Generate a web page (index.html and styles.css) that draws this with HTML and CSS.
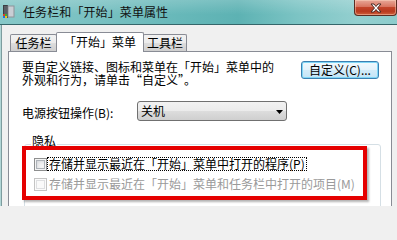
FILE: index.html
```html
<!DOCTYPE html>
<html lang="zh-CN">
<head>
<meta charset="utf-8">
<title>任务栏和「开始」菜单属性</title>
<link rel="stylesheet" href="styles.css">
</head>
<body>
<div class="window">
  <div class="titlebar">
    <svg class="app-icon" width="12" height="14" viewBox="0 0 12 14">
      <rect x="0.5" y="0.5" width="4" height="12" fill="#5a5f66" stroke="#3b3f44"/>
      <rect x="5" y="1" width="6" height="11" fill="#c9ced4" stroke="#8d9399" stroke-width="1"/>
      <rect x="0" y="9" width="2" height="2" fill="#e04020"/>
      <rect x="2" y="9" width="2" height="2" fill="#40b030"/>
      <rect x="0" y="11" width="2" height="2" fill="#2070e0"/>
      <rect x="2" y="11" width="2" height="2" fill="#f0c020"/>
    </svg>
    <span class="title">任务栏和「开始」菜单属性</span>
    <div class="close">
      <svg width="12" height="10" viewBox="0 0 12 10">
        <path d="M1 1 L4 1 L6 3.5 L8 1 L11 1 L7.5 5 L11 9 L8 9 L6 6.5 L4 9 L1 9 L4.5 5 Z" fill="#ffffff" stroke="#4a2a24" stroke-width="1" stroke-linejoin="round"/>
      </svg>
    </div>
  </div>
  <div class="client">
    <div class="tabs">
      <div class="tab tab-first">任务栏</div>
      <div class="tab tab-active">「开始」菜单</div>
      <div class="tab tab-last">工具栏</div>
    </div>
    <div class="panel">
      <div class="intro">
        <div class="intro-text">
          <div class="intro-line">要自定义链接、图标和菜单在「开始」菜单中的</div>
          <div class="intro-line">外观和行为，请单击“自定义”。</div>
        </div>
        <button class="btn">自定义(C)...</button>
      </div>
      <div class="power">
        <label class="power-label">电源按钮操作(B):</label>
        <div class="combo">
          <span class="combo-text">关机</span>
          <svg class="combo-arrow" width="7" height="4" viewBox="0 0 7 4"><path d="M0 0 H7 L3.5 4 Z" fill="#000"/></svg>
        </div>
      </div>
      <fieldset class="group">
        <legend class="group-title">隐私</legend>
        <div class="check-row">
          <span class="cb"></span>
          <span class="cb-label cb-focus">存储并显示最近在「开始」菜单中打开的程序(P)</span>
        </div>
        <div class="check-row check-row-2 disabled">
          <span class="cb"></span>
          <span class="cb-label">存储并显示最近在「开始」菜单和任务栏中打开的项目(M)</span>
        </div>
      </fieldset>
    </div>
  </div>
  <div class="annotation"></div>
</div>
</body>
</html>
```
FILE: styles.css
```css
html, body {
  margin: 0;
  padding: 0;
  background: #f0f0f0;
}
body {
  width: 397px;
  height: 206px;
  overflow: hidden;
  font-family: "Noto Sans CJK SC", "Noto Sans", sans-serif;
  font-size: 12px;
  color: #000;
}
.window {
  position: relative;
  width: 397px;
  height: 206px;
  overflow: hidden;
}
.titlebar {
  height: 24px;
  display: flex;
  align-items: center;
  border-bottom: 1px solid #35666a;
  background:
    linear-gradient(180deg, rgba(255,255,255,0.18), rgba(255,255,255,0) 60%),
    linear-gradient(90deg, #86c8c8 0%, #78c0c1 25%, #67b8b9 45%, #5db2b3 60%, #7cc4c4 75%, #93cfcf 90%, #8dcccc 100%);
}
.app-icon {
  margin-left: 3px;
  flex: none;
}
.title {
  margin-left: 8px;
  color: #111;
  line-height: 14px;
  letter-spacing: 0.1px;
}
.close {
  margin-left: auto;
  align-self: flex-start;
  width: 43px;
  height: 16px;
  box-sizing: border-box;
  border: 1px solid #5b2c22;
  border-top: none;
  border-radius: 0 0 4px 4px;
  background:
    linear-gradient(180deg, #e8a898 0%, #d87460 45%, #c3442a 50%, #b8391f 75%, #d0603c 100%);
  box-shadow: inset 0 0 0 1px rgba(255,220,200,0.45);
  display: flex;
  align-items: center;
  justify-content: center;
}
.client {
  border-left: 1px solid #b2d6d6;
  box-shadow: inset 1px 0 0 #7d9c9e;
  height: 181px;
  overflow: hidden;
}
.tabs {
  display: flex;
  align-items: flex-end;
  height: 19px;
  margin: 7px 0 0 7px;
  padding-left: 2px;
}
.tab {
  box-sizing: border-box;
  height: 17px;
  border: 1px solid #898c95;
  border-bottom: none;
  background: linear-gradient(180deg, #f2f2f2 0%, #ebebeb 50%, #dddddd 51%, #cfcfcf 100%);
  text-align: center;
  line-height: 16px;
  border-radius: 2px 2px 0 0;
}
.tab-first {
  width: 47px;
}
.tab-active {
  position: relative;
  z-index: 1;
  width: 88px;
  height: 20px;
  margin: 0 -1px -1px -1px;
  background: #ffffff;
  line-height: 17px;
}
.tab-last {
  width: 44px;
}
.panel {
  box-sizing: border-box;
  width: 384px;
  height: 240px;
  margin-left: 7px;
  border: 1px solid #898c95;
  background: #ffffff;
  padding: 9px 0 0 13px;
}
.intro {
  display: flex;
  align-items: flex-start;
}
.intro-line {
  height: 12.5px;
  line-height: 12.5px;
  white-space: nowrap;
}
.btn {
  margin: 0 12px 0 auto;
  width: 78px;
  height: 18px;
  padding: 0;
  box-sizing: border-box;
  border: 1px solid #3c7fb1;
  border-radius: 3px;
  background: linear-gradient(180deg, #f2f9fd 0%, #e3f2fb 50%, #d2ebf9 51%, #c4e4f6 100%);
  box-shadow: inset 0 0 0 1px #7fd6f6;
  font: inherit;
  font-size: 12px;
  line-height: 14px;
  color: #000;
  text-align: center;
}
.power {
  display: flex;
  align-items: center;
  margin-top: 15px;
}
.power-label {
  width: 115px;
  line-height: 14px;
  padding-top: 3px;
}
.combo {
  box-sizing: border-box;
  width: 150px;
  height: 20px;
  border: 1px solid #707070;
  border-radius: 3px;
  background: linear-gradient(180deg, #f2f2f2 0%, #ebebeb 50%, #dddddd 51%, #cfcfcf 100%);
  display: flex;
  align-items: center;
  justify-content: space-between;
  padding: 0 3px 0 3px;
}
.combo-text {
  line-height: 14px;
}
.combo-arrow {
  margin-top: 2px;
}
.group {
  box-sizing: border-box;
  width: 357px;
  height: 110px;
  margin: 14px 0 0 2px;
  padding: 0 0 0 6px;
  border: 1px solid #d5dfe5;
  border-radius: 3px;
  min-width: 0;
}
.group-title {
  padding: 0 1px 6px 1px;
  line-height: 12px;
}
.check-row {
  display: flex;
  align-items: center;
  height: 14px;
  margin: 4px 0 0 3px;
}
.check-row-2 {
  margin-top: 6px;
}
.cb {
  flex: none;
  box-sizing: border-box;
  width: 13px;
  height: 13px;
  border: 1px solid #8e8f8f;
  background: #f4f4f4;
  box-shadow: inset 0 0 0 1px #f4f4f4, inset 0 0 0 2px #aeb3b9, inset 2px 2px 4px #c9ccd1;
}
.cb-label {
  box-sizing: border-box;
  height: 14px;
  line-height: 12px;
  padding: 0 1px;
  border: 1px solid transparent;
  white-space: nowrap;
}
.cb-focus {
  border: 1px dotted #000;
}
.disabled .cb {
  border-color: #c4c4c4;
  background: #fafafa;
  box-shadow: inset 0 0 0 1px #fbfbfb, inset 0 0 0 2px #dedfe1;
}
.disabled .cb-label {
  color: #9a9a9a;
}
.annotation {
  position: absolute;
  left: 22px;
  top: 146px;
  width: 345px;
  height: 54px;
  box-sizing: border-box;
  border: 4px solid #e50000;
  box-shadow: 2px 2px 2px rgba(0,0,0,0.3);
  pointer-events: none;
}
```
